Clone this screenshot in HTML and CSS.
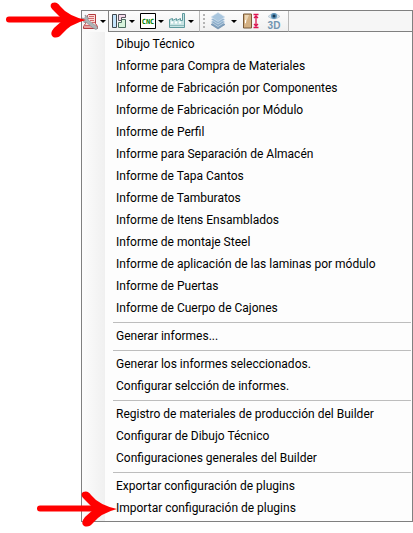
FILE: index.html
```html
<!DOCTYPE html>
<html lang="es">
<head>
    <meta charset="UTF-8">
    <meta name="viewport" content="width=device-width, initial-scale=1.0">
    <title>Informes</title>
    <link rel="stylesheet" href="styles.css">
</head>
<body>
    <div class="window">
        <div class="toolbar">
            <button class="tool open" aria-label="Informes">
                <svg width="17" height="18" viewBox="0 0 17 18">
                    <path d="M5.500 2.500L6.500 1.500H13.500V10.500L15.500 13.500V15.500H1.500V13.500L3.500 10.500 5 5z" fill="#f9dcd8" stroke="#b23a3e"/>
                    <path d="M7 3.500h5M6 5.500h6M8 7.500h4M10 9.500h3M3 12.500h5M2 14h8" stroke="#d4686a"/>
                    <path d="M0 5l2 .5L3.500 4 3 2 6 4v3l8 6 2 2-2 1.500-3-1.500-7-6-2 .5z" fill="#b0b4b6" stroke="#7f8386" stroke-width=".6"/>
                </svg>
                <span class="caret"></span>
            </button>
            <div class="strip">
                <button class="tool" aria-label="Plano">
                    <svg width="15" height="16" viewBox="0 0 15 16">
                        <path d="M.5 1.500h4v13h-4z" fill="#c5e4fb" stroke="#41484e"/>
                        <path d="M6.500 1.500h7v3h-4v3h-3z" fill="#f6dceb" stroke="#5b5560"/>
                        <path d="M6.500 9.500h3v-3h4v8h-7z" fill="#d8f3dc" stroke="#4c6d60"/>
                    </svg>
                    <span class="caret"></span>
                </button>
                <button class="tool" aria-label="CNC">
                    <svg width="16" height="16" viewBox="0 0 16 16">
                        <path d="M.5.5h15v15H.5z" fill="#fff" stroke="#000"/>
                        <text class="cnc" x="8" y="11" text-anchor="middle">CNC</text>
                    </svg>
                    <span class="caret"></span>
                </button>
                <button class="tool" aria-label="Producción">
                    <svg width="17" height="16" viewBox="0 0 17 16">
                        <path d="M.5 14.500v-8l3-1v2l4-2v2l4-2v2h2v-7h2v14z" fill="#c9e4e4" stroke="#5f9a9e"/>
                        <path d="M2 9.500h2M6 9.500h2M10 9.500h2" stroke="#fff" stroke-width="2"/>
                        <path d="M1 12.500h14" stroke="#8fbcbd"/>
                    </svg>
                    <span class="caret"></span>
                </button>
            </div>
            <div class="strip view">
                <span class="grip"></span>
                <button class="tool layers" aria-label="Capas">
                    <svg width="16" height="18" viewBox="0 0 16 18">
                        <path d="M8 8l7 4.500-7 4.500-7-4.500z" fill="#7f9fbc" stroke="#6787a6" stroke-width=".6"/>
                        <path d="M8 5.500l7 4.500-7 4.500L1 10z" fill="#8aabc8" stroke="#dce8f2" stroke-width=".6"/>
                        <path d="M8 3l7 4.500L8 12 1 7.500z" fill="#94b4d0" stroke="#dce8f2" stroke-width=".6"/>
                        <path d="M8 .5L15 5 8 9.500 1 5z" fill="#a9c6de" stroke="#dce8f2" stroke-width=".6"/>
                    </svg>
                    <span class="caret"></span>
                </button>
                <button class="tool door" aria-label="Medir altura">
                    <svg width="18" height="16" viewBox="0 0 18 16">
                        <path d="M1.500 1h8v14h-8z" fill="#d3b083" stroke="#795a38"/>
                        <path d="M3 2h4L3 12z" fill="#ecd6b5"/>
                        <path d="M3.500 7v3" stroke="#fff"/>
                        <path d="M11.500 1.500h5M11.500 14.500h5M14 3v10M12 5l2-2 2 2M12 11l2 2 2-2" fill="none" stroke="#dc1450" stroke-width="1.300"/>
                    </svg>
                </button>
                <button class="tool" aria-label="Vista 3D">
                    <svg width="16" height="18" viewBox="0 0 16 18">
                        <path d="M2 4.500Q8-1.500 14 4.500 8 9.500 2 4.500z" fill="#d5e1ea" stroke="#a9bdcc" stroke-width=".6"/>
                        <circle cx="8" cy="4" r="3" fill="#5b91b8"/>
                        <circle cx="8" cy="4" r="1.500" fill="#173a57"/>
                        <text class="three-d" x="8" y="17" text-anchor="middle">3D</text>
                    </svg>
                </button>
            </div>
            <div class="rest"></div>
            <svg class="pointer" width="80" height="36" viewBox="0 0 80 36" aria-hidden="true">
                <path d="M3 17.500h62" stroke="#f00" stroke-width="6" stroke-linecap="round"/>
                <path d="M46 1Q51-1 54 4 62 14 80 18 64 22 56 32 52 37 47 35 43 32 48 26L57 18 49 10Q42 4 46 1z" fill="#f00"/>
            </svg>
        </div>

        <ul class="menu" role="menu">
            <li><button role="menuitem">Dibujo Técnico</button></li>
            <li><button role="menuitem">Informe para Compra de Materiales</button></li>
            <li><button role="menuitem">Informe de Fabricación por Componentes</button></li>
            <li><button role="menuitem">Informe de Fabricación por Módulo</button></li>
            <li><button role="menuitem">Informe de Perfil</button></li>
            <li><button role="menuitem">Informe para Separación de Almacén</button></li>
            <li><button role="menuitem">Informe de Tapa Cantos</button></li>
            <li><button role="menuitem">Informe de Tamburatos</button></li>
            <li><button role="menuitem">Informe de Itens Ensamblados</button></li>
            <li><button role="menuitem">Informe de montaje Steel</button></li>
            <li><button role="menuitem">Informe de aplicación de las laminas por módulo</button></li>
            <li><button role="menuitem">Informe de Puertas</button></li>
            <li><button role="menuitem">Informe de Cuerpo de Cajones</button></li>
            <li class="separator" role="separator"></li>
            <li><button role="menuitem">Generar informes...</button></li>
            <li class="separator" role="separator"></li>
            <li><button role="menuitem">Generar los informes seleccionados.</button></li>
            <li><button role="menuitem">Configurar selcción de informes.</button></li>
            <li class="separator" role="separator"></li>
            <li><button role="menuitem">Registro de materiales de producción del Builder</button></li>
            <li><button role="menuitem">Configurar de Dibujo Técnico</button></li>
            <li><button role="menuitem">Configuraciones generales del Builder</button></li>
            <li class="separator" role="separator"></li>
            <li><button role="menuitem">Exportar configuración de plugins</button></li>
            <li class="marked">
                <button role="menuitem">Importar configuración de plugins</button>
                <svg class="pointer" width="80" height="36" viewBox="0 0 80 36" aria-hidden="true">
                    <path d="M3 17.500h62" stroke="#f00" stroke-width="6" stroke-linecap="round"/>
                    <path d="M46 1Q51-1 54 4 62 14 80 18 64 22 56 32 52 37 47 35 43 32 48 26L57 18 49 10Q42 4 46 1z" fill="#f00"/>
                </svg>
            </li>
        </ul>
    </div>
</body>
</html>
```
FILE: styles.css
```css
body {
    margin: 0;
    background: #fff;
    color: #000;
    font-family: Roboto, "Open Sans", sans-serif;
    font-size: 12px;
}

button {
    border: 0;
    padding: 0;
    background: none;
    color: inherit;
    font: inherit;
    text-align: left;
}

.window {
    padding: 10px 0 10px 81px;
}

/* toolbar */
.toolbar {
    position: relative;
    display: flex;
    height: 22px;
    box-sizing: border-box;
    border: 1px solid #808080;
    border-bottom: 0;
    background: #f6f6f6;
}

.tool {
    display: flex;
    align-items: center;
    gap: 2px;
}

.tool svg {
    display: block;
}

.open {
    width: 26px;
    gap: 1px;
    background: #fafafa;
}

.caret {
    border: 3px solid transparent;
    border-top-color: #000;
    border-bottom: 0;
}

.strip {
    display: flex;
    gap: 5px;
    padding: 0 5px 0 3px;
    border-left: 1px solid #808080;
    border-bottom: 1px solid #808080;
    background: linear-gradient(#fcfcfc, #f0f0f0);
}

.view {
    gap: 5px;
    padding: 0 6px 0 3px;
    border-left-color: #b8b8b8;
}

.grip {
    width: 2px;
    margin: 3px 0 2px;
    background: repeating-linear-gradient(#b4b4b4 0 2px, transparent 2px 4px);
}

.layers {
    gap: 5px;
}

.door {
    margin-right: 1px;
}

.rest {
    flex: 1;
    border-left: 1px solid #b8b8b8;
    border-bottom: 1px solid #808080;
}

.cnc {
    fill: #008000;
    font: bold 7px "DejaVu Sans Mono", monospace;
}

.three-d {
    fill: #7195b0;
    font: bold 10px "Liberation Sans", sans-serif;
}

/* drop-down menu */
.menu {
    margin: 0;
    padding: 1px 1px 2px 0;
    list-style: none;
    border: 1px solid #808080;
    border-top: 0;
    background: linear-gradient(to right, #fcfcfc, #f0f0f0) 0 0 / 23px 100% no-repeat #fdfdfd;
}

.menu button {
    display: block;
    width: 100%;
    height: 22px;
    padding-left: 34px;
    line-height: 22px;
    white-space: nowrap;
}

.separator {
    height: 1px;
    margin: 3px 0 2px 31px;
    background: #bdbdbd;
}

.marked {
    position: relative;
}

/* red arrows */
.pointer {
    position: absolute;
    z-index: 1;
    overflow: visible;
    pointer-events: none;
}

.toolbar .pointer {
    top: -9px;
    left: -76px;
}

.marked .pointer {
    top: -6px;
    left: -45px;
}
```
